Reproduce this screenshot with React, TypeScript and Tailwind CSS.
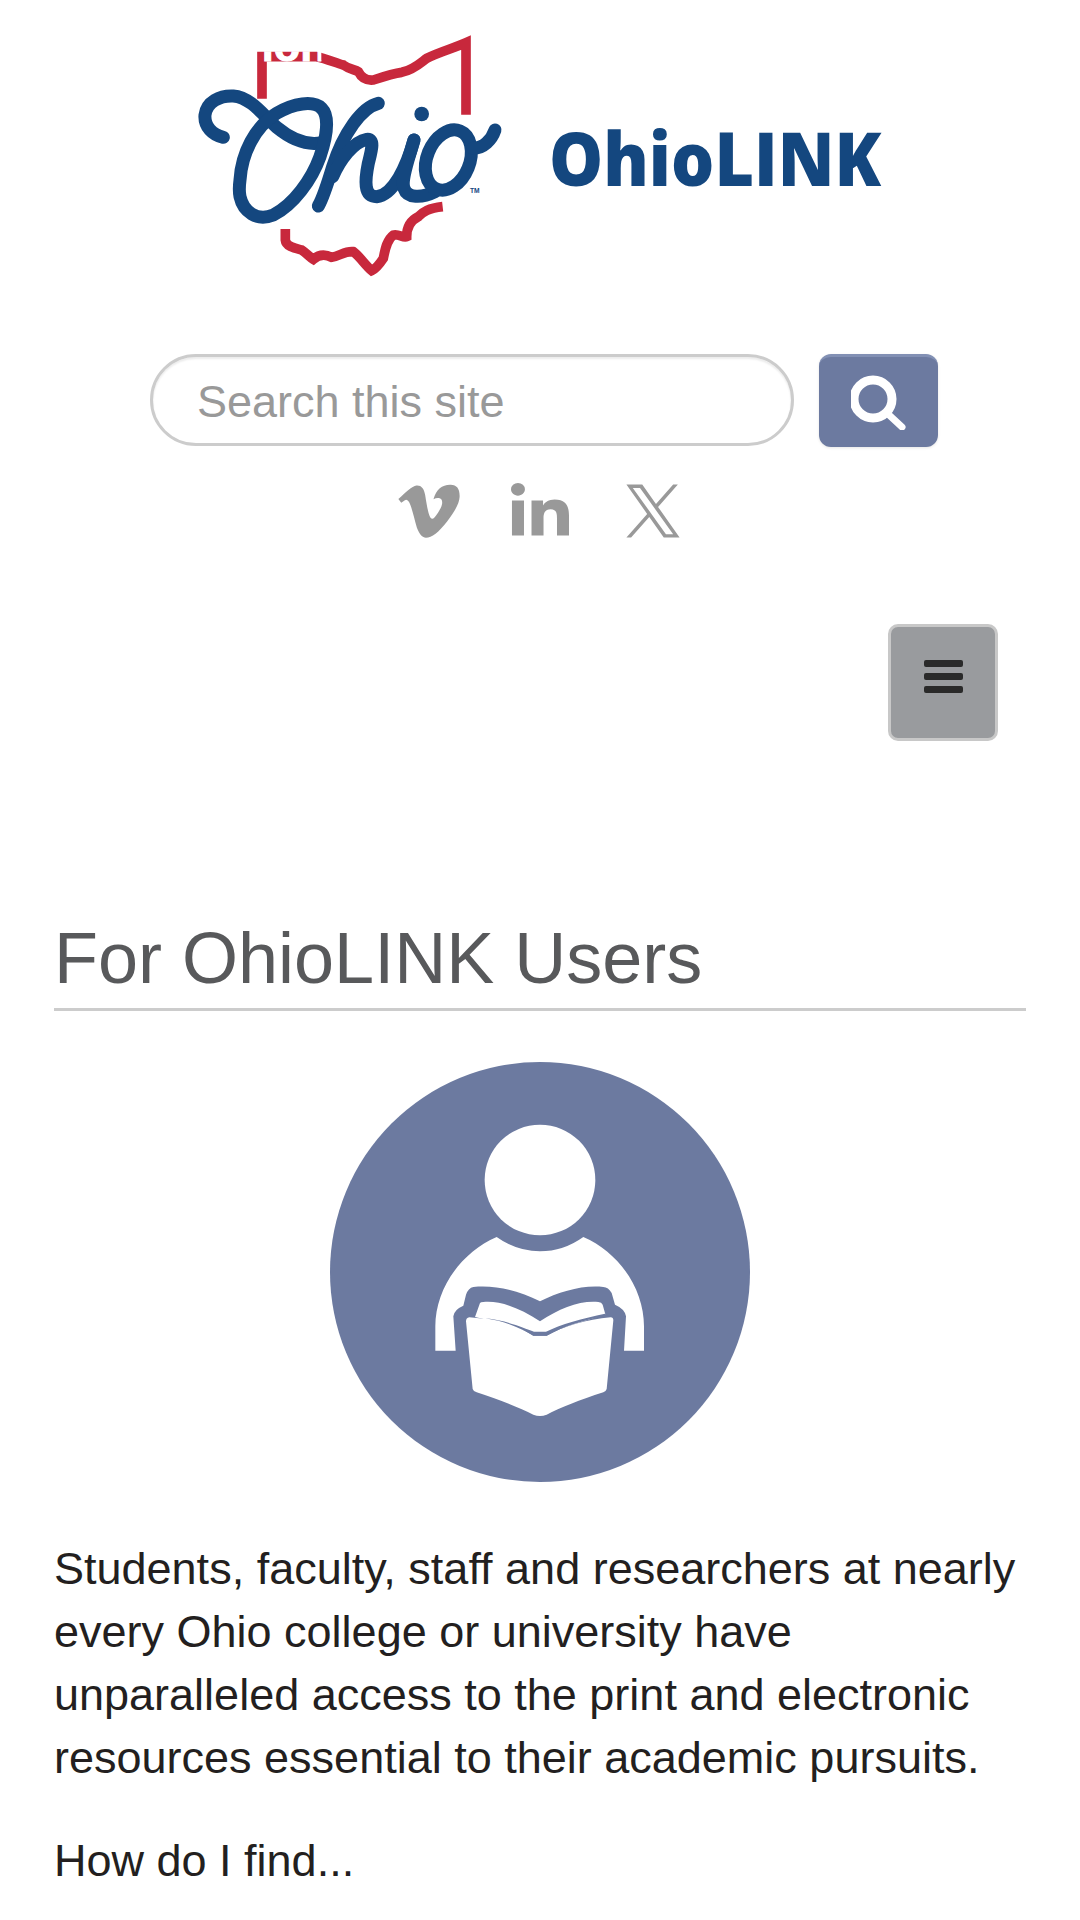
import React from 'react';
import { FaVimeoV, FaLinkedinIn } from 'react-icons/fa6';

const OhioLogo = () => (
  <svg viewBox="0 0 990 810" className="w-[330px] h-[270px] shrink-0" fill="none">
    <defs>
      <clipPath id="tagClip">
        <rect x="232" y="94" width="192" height="32" />
      </clipPath>
    </defs>
    <g stroke="#c8283c" strokeWidth="29">
      <path d="M246 236 V110 H410 C440 116 465 128 490 135 C510 150 525 148 535 155 C545 175 560 182 580 180 C610 170 640 160 665 157 C700 150 720 130 740 115 C780 95 820 85 858 68 V284" />
      <path d="M316 627 V660 C318 680 345 685 365 690 C380 700 390 712 400 718 C415 705 435 702 455 712 C480 708 495 692 520 695 C540 710 555 735 575 752 C590 745 600 730 610 715 C615 690 620 660 640 645 C655 640 670 655 680 650 C680 620 695 600 715 590 C730 575 745 565 788 560" />
    </g>
    <text x="245" y="124" clipPath="url(#tagClip)" fill="#fff" stroke="#fff" strokeWidth="3" fontSize="130" fontWeight="700" fontFamily="'Liberation Sans', sans-serif">ion</text>
    <g stroke="#14477f" strokeWidth="39" strokeLinecap="round" strokeLinejoin="round">
      <path d="M130 352 C98 345 72 320 75 285 C80 245 120 226 160 228 C210 232 245 280 290 322 C330 355 375 378 425 368" />
      <path d="M180 480 C185 400 225 320 290 280 C340 250 400 240 425 265 C450 290 440 350 420 410 C395 480 340 555 280 585 C230 605 190 575 180 530 C177 515 178 495 180 480" />
      <path d="M595 250 C545 262 490 340 458 440 C440 500 425 540 415 558" />
      <path d="M458 470 C480 420 520 365 560 358 C585 355 575 390 565 430 C555 480 550 530 590 530 C640 525 680 440 702 360" />
      <path d="M702 360 C685 420 662 480 672 505 C682 535 725 535 765 515" />
      <ellipse cx="805" cy="420" rx="64" ry="94" transform="rotate(22 805 420)" />
      <path d="M880 385 C910 385 935 360 945 330" />
    </g>
    <circle cx="725" cy="282" r="22" fill="#14477f" />
    <text x="870" y="519" fill="#14477f" fontSize="20" fontWeight="700" fontFamily="'Liberation Sans', sans-serif">TM</text>
  </svg>
);

const ReaderIcon = () => (
  <svg viewBox="30 37 1260 1260" className="w-[420px] h-[420px] block mx-auto">
    <circle cx="660" cy="667" r="630" fill="#6c7aa0" />
    <circle cx="660" cy="391" r="166" fill="#fff" />
    <path
      fill="#fff"
      d="M530 562 Q590 605 660 605 Q730 605 790 562 C900 610 972 720 972 830 V903 H912 L918 800 Q915 778 885 765 L875 730 Q865 712 850 712 C790 705 720 725 660 755 C600 725 530 705 460 712 Q445 715 438 735 L430 768 Q402 780 400 800 L407 903 H346 V830 C346 720 420 610 530 562 Z"
    />
    <path fill="#fff" d="M465 802 L480 760 Q482 757 490 757 C540 752 600 775 660 815 C720 775 780 752 835 757 Q845 758 848 765 L856 794 L680 850 H640 L500 810 Z" />
    <path
      fill="#fff"
      d="M448 803 L500 808 C560 815 610 840 640 858 H680 C730 830 800 810 872 803 Q880 803 880 812 L860 1018 Q858 1025 850 1028 C780 1050 720 1075 680 1095 Q660 1103 640 1095 C600 1075 540 1050 470 1028 Q460 1025 458 1018 L438 815 Q438 805 448 803 Z"
    />
    <path fill="#6c7aa0" d="M495 806 C560 812 610 835 642 846 H678 C720 825 790 805 855 792 L856 798 C790 812 730 830 680 858 H640 C610 840 560 815 495 806 Z" />
  </svg>
);

export default function App() {
  return (
    <div className="min-h-[1920px] bg-white font-['Liberation_Sans',Arial,sans-serif] overflow-hidden">
      <header className="flex items-center pl-[180px] pt-[20px]">
        <OhioLogo />
        <span className="ml-[39px] mt-[5px] text-[74px] leading-none font-extrabold scale-x-[0.92] origin-left text-[#14477f] font-['Open_Sans',sans-serif]">OhioLINK</span>
      </header>

      <form className="flex gap-[25px] pl-[150px] mt-[64px]">
        <input
          placeholder="Search this site"
          className="w-[644px] h-[92px] rounded-full border-[3px] border-[#ccc] bg-white pl-[44px] pt-[4px] text-[45px] shadow-[inset_0_2px_2px_rgba(0,0,0,0.08)] placeholder:text-[#999] outline-none"
        />
        <button type="button" className="w-[119px] h-[93px] rounded-[12px] bg-[#6c7aa0] border-t-[3px] border-[#8290b4] flex items-center justify-center shadow-[0_1px_3px_rgba(0,0,0,0.1)]">
          <svg viewBox="0 0 56 56" className="w-[56px] h-[56px]" fill="none" stroke="#fff" strokeLinecap="round">
            <circle cx="22" cy="25" r="19" strokeWidth="9" />
            <path d="M37 40 L51 53" strokeWidth="7" />
          </svg>
        </button>
      </form>

      <div className="flex items-center justify-center mt-[29px] pr-[5px] text-[#999]">
        <FaVimeoV className="w-[70px] h-[70px]" />
        <FaLinkedinIn preserveAspectRatio="none" className="w-[58px] h-[60px] mt-[4px] ml-[47px]" />
        <svg viewBox="0 0 24 24" fill="currentColor" className="w-[58px] h-[58px] ml-[55px]">
          <path d="M14.095 10.316 22.286 1h-1.94L13.23 9.088 7.551 1H1l8.59 12.231L1 23h1.94l7.51-8.543L16.45 23H23l-8.905-12.684zm-2.658 3.022-.872-1.218L3.64 2.432h2.98l5.59 7.821.869 1.219 7.265 10.166h-2.982l-5.926-8.3z" />
        </svg>
      </div>

      <div className="flex justify-end pr-[82px] mt-[78px]">
        <button type="button" className="w-[110px] h-[117px] rounded-[10px] bg-[#999b9e] border-[3px] border-[#c8c8c8] flex flex-col items-center justify-center gap-[6px] pb-[12px]">
          <span className="block w-[39px] h-[7px] rounded-[2px] bg-[#2a2a2a]" />
          <span className="block w-[39px] h-[7px] rounded-[2px] bg-[#2a2a2a]" />
          <span className="block w-[39px] h-[7px] rounded-[2px] bg-[#2a2a2a]" />
        </button>
      </div>

      <main className="mx-[54px] mt-[178px]">
        <h1 className="text-[72px] leading-[1.1] text-[#58595b] border-b-[3px] border-[#ccc] pb-[10px]">For OhioLINK Users</h1>
        <div className="mt-[51px]">
          <ReaderIcon />
        </div>
        <p className="mt-[55px] text-[45px] leading-[63px] text-[#231f20]">
          Students, faculty, staff and researchers at nearly every Ohio college or university have unparalleled access to the print and electronic resources essential to their academic pursuits.
        </p>
        <p className="mt-[40px] text-[45px] leading-[63px] text-[#231f20]">How do I find...</p>
      </main>
    </div>
  );
}
